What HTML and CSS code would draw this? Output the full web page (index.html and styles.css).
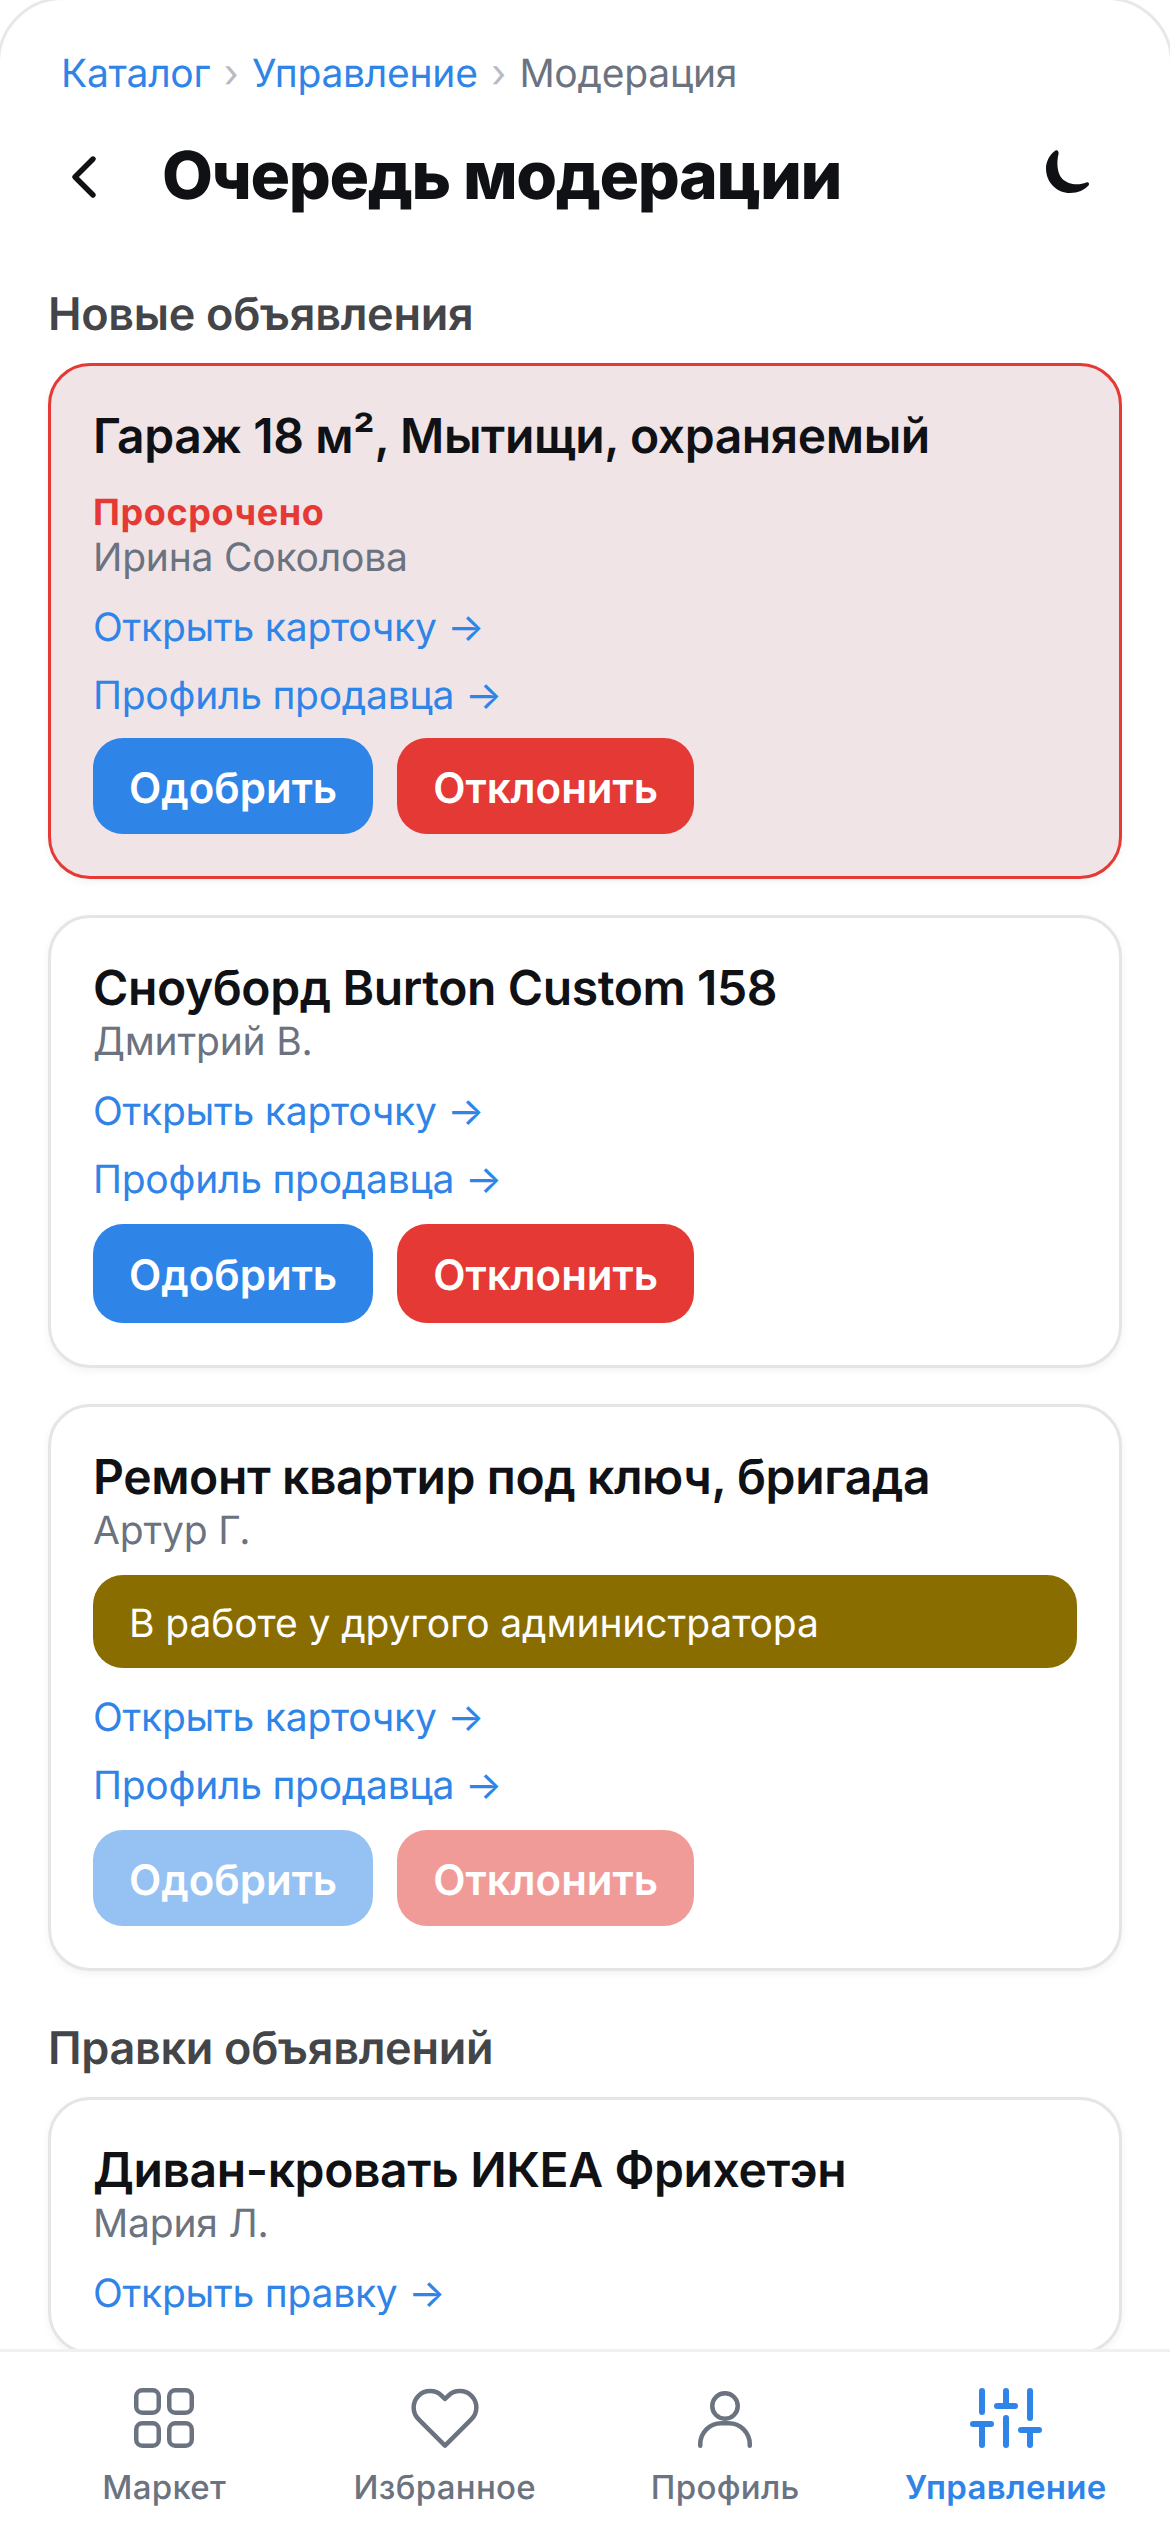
FILE: index.html
```html
<!DOCTYPE html>
<html lang="ru">
<head>
<meta charset="utf-8">
<title>Очередь модерации</title>
<link rel="stylesheet" href="styles.css">
</head>
<body>
<div class="phone">
  <main class="content">
    <nav class="crumbs">
      <a class="crumb-link">Каталог</a><span class="crumb-sep">›</span><a class="crumb-link">Управление</a><span class="crumb-sep">›</span><span class="crumb-current">Модерация</span>
    </nav>
    <header class="topbar">
      <svg class="back" viewBox="0 0 24 24" fill="none" stroke="#0f1115" stroke-width="1.8" stroke-linecap="round" stroke-linejoin="round"><path d="M15 18l-6-6 6-6"/></svg>
      <h1 class="page-title">Очередь модерации</h1>
      <svg class="moon" viewBox="0 0 72 72"><path fill="#0f1115" d="M23.500 15.500C17 20 14 27 14 33.500 14 47.500 25 58 38 58c8 0 14.500-3 18.500-7.500 1.500-2-.2-3.800-2.200-3C47 50.500 36 50 30 43.500 25 38 24.500 27 26.500 19c.6-2.600-1.200-4.700-3-3.500z"/></svg>
    </header>

    <h2 class="section-title">Новые объявления</h2>
    <section class="card card-overdue">
      <h3 class="card-title">Гараж 18 м², Мытищи, охраняемый</h3>
      <div class="overdue">Просрочено</div>
      <div class="seller">Ирина Соколова</div>
      <div class="links">
        <a class="link">Открыть карточку →</a>
        <a class="link">Профиль продавца →</a>
      </div>
      <div class="actions">
        <button class="btn btn-approve">Одобрить</button>
        <button class="btn btn-reject">Отклонить</button>
      </div>
    </section>

    <section class="card">
      <h3 class="card-title">Сноуборд Burton Custom 158</h3>
      <div class="seller">Дмитрий В.</div>
      <div class="links">
        <a class="link">Открыть карточку →</a>
        <a class="link">Профиль продавца →</a>
      </div>
      <div class="actions actions-tall">
        <button class="btn btn-approve">Одобрить</button>
        <button class="btn btn-reject">Отклонить</button>
      </div>
    </section>

    <section class="card">
      <h3 class="card-title">Ремонт квартир под ключ, бригада</h3>
      <div class="seller">Артур Г.</div>
      <div class="banner">В работе у другого администратора</div>
      <div class="links links-tight">
        <a class="link">Открыть карточку →</a>
        <a class="link">Профиль продавца →</a>
      </div>
      <div class="actions actions-disabled">
        <button class="btn btn-approve">Одобрить</button>
        <button class="btn btn-reject">Отклонить</button>
      </div>
    </section>

    <h2 class="section-title section-title-next">Правки объявлений</h2>
    <section class="card card-edit">
      <h3 class="card-title">Диван-кровать ИКЕА Фрихетэн</h3>
      <div class="seller">Мария Л.</div>
      <div class="links">
        <a class="link">Открыть правку →</a>
      </div>
    </section>
  </main>

  <nav class="tabbar">
    <a class="tab">
      <svg class="tab-icon" viewBox="0 0 24 24" fill="none" stroke="currentColor" stroke-width="1.5"><rect x="2.750" y="2.750" width="7.500" height="7.500" rx="2"/><rect x="13.750" y="2.750" width="7.500" height="7.500" rx="2"/><rect x="2.750" y="13.750" width="7.500" height="7.500" rx="2"/><rect x="13.750" y="13.750" width="7.500" height="7.500" rx="2"/></svg>
      <span class="tab-label">Маркет</span>
    </a>
    <a class="tab">
      <svg class="tab-icon" viewBox="0 0 24 24" fill="none" stroke="currentColor" stroke-width="1.5" stroke-linejoin="round"><path d="M20.840 4.610a5.500 5.500 0 0 0-7.780 0L12 5.670l-1.060-1.060a5.500 5.500 0 0 0-7.780 7.780l1.060 1.060L12 21.230l7.780-7.780 1.060-1.060a5.500 5.500 0 0 0 0-7.780z"/></svg>
      <span class="tab-label">Избранное</span>
    </a>
    <a class="tab">
      <svg class="tab-icon" viewBox="0 0 24 24" fill="none" stroke="currentColor" stroke-width="1.5" stroke-linecap="round"><circle cx="12" cy="8" r="4.250"/><path d="M3.750 21.250v-.5a7 7 0 0 1 7-7h2.500a7 7 0 0 1 7 7v.5"/></svg>
      <span class="tab-label">Профиль</span>
    </a>
    <a class="tab tab-active">
      <svg class="tab-icon" viewBox="0 0 24 24" fill="none" stroke="currentColor" stroke-width="2" stroke-linecap="round"><path d="M4 21v-7M4 10V3M12 21v-9M12 8V3M20 21v-5M20 12V3M1 14h6M9 8h6M17 16h6"/></svg>
      <span class="tab-label">Управление</span>
    </a>
  </nav>
</div>
</body>
</html>
```
FILE: styles.css
```css
* { box-sizing: border-box; }
html, body { margin: 0; padding: 0; height: 100%; overflow: hidden; background: #fff; }
body { font-family: Inter, "Liberation Sans", sans-serif; color: #0f1115; text-rendering: geometricPrecision; }

.phone {
  width: 1176px;
  height: 2538px;
  margin: -3px;
  border: 3px solid #e8e8e8;
  border-radius: 66px 66px 0 0;
  background: #fff;
  display: flex;
  flex-direction: column;
  overflow: hidden;
}
.content { flex: 1; min-height: 0; overflow: hidden; padding: 50px 48px 0; }

.crumbs { display: flex; align-items: center; height: 48px; padding-left: 13px; font-size: 39px; line-height: 48px; letter-spacing: -0.25px; }
.crumb-link { color: #2f84e8; }
.crumb-sep { color: #b8bbc1; margin: 0 13.5px; }
.crumb-current { color: #6b7280; }

.topbar { display: flex; align-items: center; margin-top: 41px; height: 72px; }
.back { width: 72px; height: 72px; flex: none; margin-top: 4px; }
.page-title { margin: 0 0 0 42px; flex: 1; font-size: 66px; line-height: 72px; font-weight: 800; letter-spacing: -1.4px; }
.moon { width: 72px; height: 72px; flex: none; margin: 0 18px 8px 0; }

.section-title { margin: 76px 0 0; font-size: 45px; line-height: 54px; font-weight: 600; letter-spacing: -0.3px; color: #444548; }
.section-title-next { margin-top: 50px; }

.card {
  margin-top: 36px;
  border: 3px solid #e5e5e5;
  border-radius: 42px;
  background: #fff;
  padding: 42px;
  box-shadow: 0 3px 9px rgba(0, 0, 0, 0.05);
}
.section-title + .card { margin-top: 22px; }
.card-overdue { border-color: #e53935; background: #f0e4e6; }
.card-edit { padding-bottom: 24px; }
.card-title { margin: 0; font-size: 48px; line-height: 56px; font-weight: 600; letter-spacing: -0.4px; color: #0f1115; }
.overdue { margin-top: 28px; font-size: 36px; line-height: 40px; font-weight: 700; letter-spacing: 0.6px; color: #e53935; }
.seller { font-size: 39px; line-height: 52px; letter-spacing: -0.2px; color: #6b7280; }
.links { margin-top: 9px; display: flex; flex-direction: column; align-items: flex-start; }
.links-tight { margin-top: 15px; }
.link { display: block; font-size: 39px; line-height: 51px; padding: 8.5px 0; letter-spacing: -0.25px; color: #2f84e8; }

.banner { margin-top: 18px; height: 93px; padding: 0 36px; border-radius: 30px; background: #8a6d00; color: #fff; font-size: 39px; line-height: 97px; letter-spacing: -0.1px; }

.actions { display: flex; gap: 24px; margin-top: 11px; }
.card-overdue .actions { margin-top: 9px; }
.btn { height: 96px; padding: 4px 36px 0; border: 0; border-radius: 30px; font-family: inherit; font-size: 42px; font-weight: 600; color: #fff; text-rendering: inherit; }
.actions-tall .btn { height: 99px; }
.btn-approve { background: #2f84e8; }
.btn-reject { background: #e53935; }
.actions-disabled .btn { opacity: 0.5; }

.tabbar {
  flex: none;
  height: 183px;
  border-top: 3px solid #f0f0f0;
  padding: 30px 24px 0;
  background: #fff;
  display: grid;
  grid-template-columns: repeat(4, 1fr);
}
.tab { display: flex; flex-direction: column; align-items: center; color: #6b7280; }
.tab-icon { width: 72px; height: 72px; flex: none; }
.tab-label { margin-top: 12px; font-size: 33px; line-height: 42px; font-weight: 500; letter-spacing: 0.3px; }
.tab-active { color: #2f84e8; }
.tab-active .tab-label { font-weight: 600; }
```
